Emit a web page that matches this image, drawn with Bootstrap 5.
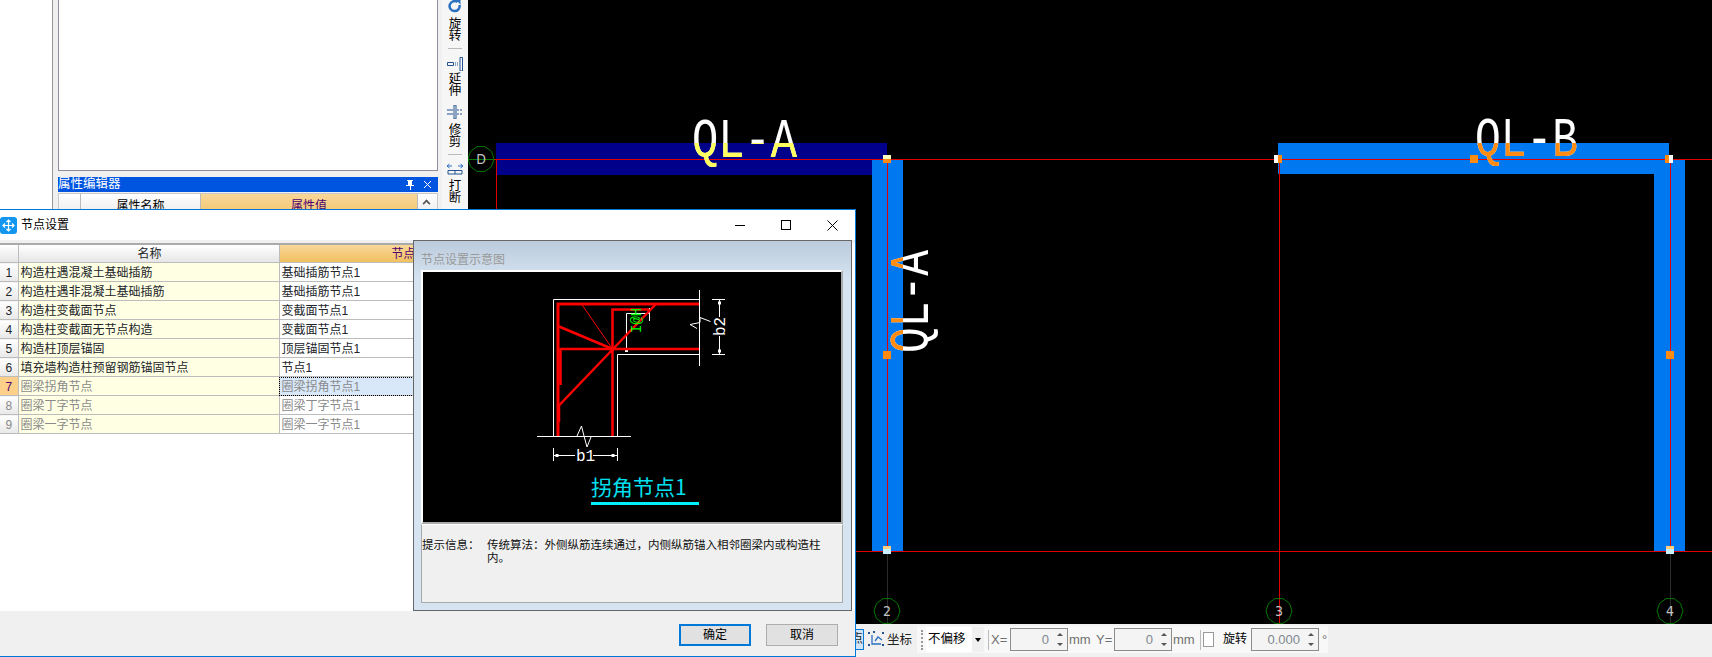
<!DOCTYPE html>
<html lang="zh-CN">
<head>
<meta charset="UTF-8">
<title>节点设置</title>
<link href="https://cdn.jsdelivr.net/npm/bootstrap@5.3.3/dist/css/bootstrap.min.css" rel="stylesheet">
<style>
body { margin: 0; width: 1712px; height: 657px; overflow: hidden; position: relative; background: #000; font: 12px/1.2 "Liberation Sans", "Noto Sans CJK SC", sans-serif; color: #000; }
.app-main { height: 624px; }
.side-blank { width: 53px; flex: none; background: #fff; border-right: 1px solid #999; }
.side-panel { width: 389px; flex: none; background: #f0f0f0; padding: 0 4px 0 5px; }
.list-box { height: 171px; background: #fff; border: 1px solid #8c8c9c; border-top: 0; }
.prop-title { height: 15px; margin-top: 6px; background: #0055e0; color: #fff; font-size: 12.5px; line-height: 15px; }
.prop-head { height: 30px; margin-top: 1px; border: 1px solid #c8c8c8; }
.prop-head > div { background: linear-gradient(#fff, #e4e4e4); border-right: 1px solid #bbb; text-align: center; line-height: 24px; }
.prop-head .ph-blank { width: 22px; }
.prop-head .ph-name { width: 120px; }
.prop-head .ph-val { width: 217px; background: linear-gradient(#f8d798, #f0c060); color: #500070; }
.prop-head .ph-scroll { flex-grow: 1; border-right: 0; position: relative; }
.prop-head .ph-scroll::after { content: ""; position: absolute; left: 5px; top: 6px; width: 7px; height: 7px; border: solid #555; border-width: 2px 0 0 2px; transform: rotate(45deg) scale(.8); }
.tool-strip { width: 26px; flex: none; background: #f6f6f6; }
.tool-strip svg { flex: none; }
.tool-item { width: 13px; line-height: 12px; text-align: center; font-size: 12.5px; flex: none; }
.tool-sep { width: 14px; height: 1px; background: #bbb; flex: none; }
.mt-tool-2 { margin-top: 2px; }
.mt-tool-5 { margin-top: 5px; }
.mt-tool-6 { margin-top: 6px; }
.mt-tool-8 { margin-top: 8px; }
.cad-view { width: 1244px; height: 624px; display: block; background: #000; flex: none; }
.cad-text { font-family: "Liberation Mono", monospace; }
.grid-no { font: 14px "DejaVu Sans Condensed", "DejaVu Sans", sans-serif; fill: #c4c4c4; text-anchor: middle; }
.status-bar { height: 33px; background: #f0f0f0; padding-left: 855px; color: #222; }
.status-bar > * { flex: none; }
.snap-btn { width: 9px; height: 21px; margin-top: 5px; border: 1px solid #0078d7; background: #cfe5f7; overflow: hidden; line-height: 19px; direction: rtl; }
.snap-icon { margin: 5px 2px 0 3px; }
.coord-label { width: 25px; font-size: 12.5px; white-space: nowrap; line-height: 33px; }
.tool-group { height: 27px; margin: 2px 0 0 5px; width: 411px; background: #f8f8f8; padding-left: 4px; color: #707070; font-size: 13px; white-space: nowrap; }
.tool-group > * { flex: none; }
.grip-dots { width: 2px; height: 20px; border-left: 2px dotted #999; }
.combo-box { width: 46px; height: 25px; background: #fff; margin-left: 3px; color: #000; line-height: 25px; padding-left: 2px; font-size: 12.500px; }
.combo-arrow { width: 12px; height: 25px; background: #f0f0f0; position: relative; }
.combo-arrow::after { content: ""; position: absolute; left: 3px; top: 11px; border: 3px solid transparent; border-top: 4px solid #000; }
.bar-sep { width: 1px; height: 20px; background: #bbb; }
.sep-a { margin-left: 4px; }
.x-label { width: 19px; margin-left: 2px; }
.y-label { width: 18px; }
.mm-label { width: 27px; margin-left: 1px; }
.spin-box { width: 58px; height: 23px; border: 1px solid #8c8c8c; background: #f4f4f4; color: #808890; text-align: right; line-height: 21px; padding-right: 18px; position: relative; }
.spin-box::before, .spin-box::after { content: ""; position: absolute; right: 4px; border: 3px solid transparent; }
.spin-box::before { top: 1px; border-bottom: 3px solid #555; }
.spin-box::after { bottom: 1px; border-top: 3px solid #555; }
.spin-wide { width: 68px; margin-left: 4px; }
.check-box { width: 11px; height: 15px; margin-left: 2px; border: 1px solid #999; background: #fff; }
.rot-label { width: 24px; margin-left: 9px; color: #000; font-size: 12px; }
.deg-label { margin-left: 3px; }
.node-dialog { position: absolute; left: 0; top: 209px; width: 856px; height: 448px; background: #fff; border: 1px solid #0078d7; border-left: 0; }
.dialog-title { height: 30px; }
.dialog-title .title-text { margin-left: 4px; font-size: 12px; }
.win-btn { width: 46px; height: 30px; }
.dialog-body { height: 371px; position: relative; overflow: hidden; background: #fff; }
.dialog-gap { height: 3px; background: #f0f0f0; }
.node-table { table-layout: fixed; width: 550px; margin: 0; border-collapse: collapse; border-top: 2px solid #aaa; }
.node-table th, .node-table td { height: 19px; padding: 2px 0 0 2px; font-size: 12px; line-height: 15px; vertical-align: middle; border: 1px solid #bcbcbc; border-left: 0; border-top: 0; font-weight: 400; white-space: nowrap; overflow: hidden; box-shadow: none; }
.node-table th { height: 18px; background: linear-gradient(#fff, #e6e6e6); text-align: center; }
.node-table th.val-head { background: linear-gradient(#f8d798, #f0c060); color: #500070; }
.node-table td.row-no { background: linear-gradient(#fff, #e8e8e8); text-align: center; padding-left: 0; }
.node-table td.row-name { background: #ffffe4; }
.node-table td.row-val { background: #fff; }
.node-table tr.row-off td { color: #8a8a8a; }
.node-table tr.row-sel td.row-no { background: #fdd08a; color: #500070; }
.node-table td.cell-sel { background: #d8e8f8; outline: 1px dotted #000; outline-offset: -1px; }
.preview-panel { position: absolute; left: 413px; top: 0; width: 439px; height: 371px; border: 1px solid #666; background: linear-gradient(#bccbdc, #d6e4f2 40px); }
.preview-title { height: 29px; padding: 12px 0 0 7px; color: #999; font-size: 12px; }
.preview-pic { display: block; width: 422px; height: 254px; margin-left: 7px; border: solid; border-width: 2px; border-color: #fff #aaa #aaa #fff; background: #000; }
.hint-box { width: 422px; height: 79px; margin-left: 7px; background: #f0f0f0; border: 1px solid #aaa; border-top-color: #fff; padding: 14px 0 0 0; font-size: 11.5px; line-height: 13px; color: #111; }
.hint-label { width: 65px; flex: none; }
.dialog-foot { height: 45px; background: #f0f0f0; padding: 13px 17px 0 0; column-gap: 15px; }
.dlg-btn { width: 72px; height: 22px; padding: 0; line-height: 18px; font-size: 12px; border-radius: 0; background: #e1e1e1; border: 1px solid #adadad; color: #000; }
.dlg-btn-main { border: 2px solid #0078d7; }
</style>
</head>
<body>

<div class="app-main d-flex">
  <div class="side-blank"></div>
  <div class="side-panel">
    <div class="list-box"></div>
    <div class="prop-title d-flex justify-content-between">
      <span>属性编辑器</span>
      <svg width="34" height="15" viewBox="0 0 34 15"><path d="M3 3h6v1h-1v4h2v1H7v4H6V9H2V8h2V4H3z" fill="#fff"/><path d="M20 4l7 7M27 4l-7 7" stroke="#fff" fill="none"/></svg>
    </div>
    <div class="prop-head d-flex">
      <div class="ph-blank"></div>
      <div class="ph-name">属性名称</div>
      <div class="ph-val">属性值</div>
      <div class="ph-scroll"></div>
    </div>
  </div>
  <div class="tool-strip d-flex flex-column align-items-center">
    <svg width="14" height="13" viewBox="0 0 14 13"><path d="M11.500 5a5 5 0 1 1-2-3" fill="none" stroke="#2a6fc0" stroke-width="2.500"/><path d="M8 0h4.500v4.500z" fill="#2a6fc0"/></svg>
    <div class="tool-item mt-tool-5">旋<br>转</div>
    <div class="tool-sep mt-tool-6"></div>
    <svg class="mt-tool-8" width="16" height="14" viewBox="0 0 16 14"><path d="M.5 5.500h6v3h-6z" fill="none" stroke="#25518f"/><path d="M8 6h3M8 8h3" stroke="#25518f" stroke-dasharray="1 1"/><path d="M13 .5h2.500v13.500H13z" fill="none" stroke="#25518f"/></svg>
    <div class="tool-item mt-tool-2">延<br>伸</div>
    <svg class="mt-tool-8" width="16" height="14" viewBox="0 0 16 14"><path d="M0 5h6M0 9h6" stroke="#25518f"/><path d="M10 5h5M10 9h5" stroke="#25518f" stroke-dasharray="2 1"/><path d="M7 0h2v14H7z" fill="none" stroke="#25518f"/></svg>
    <div class="tool-item mt-tool-5">修<br>剪</div>
    <div class="tool-sep mt-tool-6"></div>
    <svg class="mt-tool-8" width="16" height="12" viewBox="0 0 16 12"><path d="M0 3h5M11 3h5M2.500 1L0 3l2.500 2M13.500 1L16 3l-2.500 2" fill="none" stroke="#2a6fc0"/><path d="M1 7.500h14v3.500H1zM8 7.500V11" fill="none" stroke="#25518f"/></svg>
    <div class="tool-item mt-tool-5">打<br>断</div>
  </div>

  <svg class="cad-view" viewBox="468 0 1244 624" xmlns="http://www.w3.org/2000/svg">
    <defs>
      <polygon id="grid-ring" points="13,0 10.500,7.600 4,12.400 -4,12.400 -10.500,7.600 -13,0 -10.500,-7.600 -4,-12.400 4,-12.400 10.500,-7.600" fill="none" stroke="#007800"/>
      <clipPath id="clip-a"><rect x="496" y="143" width="391" height="32"/></clipPath>
      <clipPath id="clip-b"><rect x="1278" y="143" width="391" height="31"/></clipPath>
      <clipPath id="clip-v"><rect x="872" y="159" width="31" height="392"/></clipPath>
      <g id="handle"><rect x="-4" y="-4" width="8" height="8" fill="#ff8c10"/></g>
      <g id="handle-top"><rect x="-4" y="-4" width="8" height="8" fill="#ff8c10"/><rect x="-4" y="-4" width="8" height="4" fill="#ffffc0"/></g>
      <g id="handle-left"><rect x="-4" y="-4" width="8" height="8" fill="#ff8c10"/><rect x="-4" y="-4" width="4" height="8" fill="#fff"/></g>
      <g id="handle-right"><rect x="-4" y="-4" width="8" height="8" fill="#ff8c10"/><rect x="0" y="-4" width="4" height="8" fill="#fff"/></g>
      <g id="handle-low"><rect x="-4" y="-4" width="8" height="8" fill="#c8f0ff"/><rect x="-4" y="-4" width="8" height="3" fill="#ffd080"/></g>
    </defs>

    <rect x="496" y="143" width="391" height="32" fill="#00008b"/>
    <rect x="872" y="159" width="31" height="392" fill="#0078f0"/>
    <rect x="1278" y="143" width="391" height="31" fill="#0078f0"/>
    <rect x="1654" y="159" width="31" height="392" fill="#0078f0"/>

    <path d="M494 159.500H1712M496 551.500H1712M496.500 159V220M887.500 159V551M1279.500 159V624M1670.500 159V551" stroke="#e00000" fill="none"/>
    <path d="M887.500 551V624M1670.500 551V624" stroke="#2c2c2c" fill="none"/>
    <path d="M468 159.500H494" stroke="#007800"/>

    <use href="#grid-ring" x="481" y="159"/><text class="grid-no" x="481" y="164">D</text>
    <use href="#grid-ring" x="887" y="611"/><text class="grid-no" x="887" y="616">2</text>
    <use href="#grid-ring" x="1279" y="611"/><text class="grid-no" x="1279" y="616">3</text>
    <use href="#grid-ring" x="1670" y="611"/><text class="grid-no" x="1670" y="616">4</text>

    <text class="cad-text" x="692" y="157" font-size="56" fill="#fff" textLength="105" lengthAdjust="spacingAndGlyphs">QL-A</text>
    <text class="cad-text" x="692" y="157" font-size="56" fill="#ffff60" textLength="105" lengthAdjust="spacingAndGlyphs" clip-path="url(#clip-a)">QL-A</text>
    <text class="cad-text" x="1475" y="156" font-size="56" fill="#fff" textLength="103" lengthAdjust="spacingAndGlyphs">QL-B</text>
    <text class="cad-text" x="1475" y="156" font-size="56" fill="#ff8c10" textLength="103" lengthAdjust="spacingAndGlyphs" clip-path="url(#clip-b)">QL-B</text>
    <text class="cad-text" transform="translate(928 353) rotate(-90)" font-size="56" fill="#fff" textLength="103" lengthAdjust="spacingAndGlyphs">QL-A</text>
    <g clip-path="url(#clip-v)"><text class="cad-text" transform="translate(928 353) rotate(-90)" font-size="56" fill="#ff8c10" textLength="103" lengthAdjust="spacingAndGlyphs">QL-A</text></g>

    <use href="#handle-top" x="887" y="159"/>
    <use href="#handle-left" x="1278" y="159"/>
    <use href="#handle" x="1474" y="159"/>
    <use href="#handle-right" x="1669" y="159"/>
    <use href="#handle" x="887" y="355"/>
    <use href="#handle" x="1670" y="355"/>
    <use href="#handle-low" x="887" y="550"/>
    <use href="#handle-low" x="1670" y="550"/>
  </svg>
</div>

<div class="status-bar d-flex">
  <div class="snap-btn">点</div>
  <svg class="snap-icon" width="18" height="20" viewBox="0 0 18 20"><path d="M1 3h2v2H1zM15 3h2v2h-2zM1 15h2v2H1zM15 15h2v2h-2zM6 2h2v2H6z" fill="#25518f"/><path d="M5 6v9h9M8 12l3-4 4 3" fill="none" stroke="#2a6fc0" stroke-width="1.300"/></svg>
  <div class="coord-label">坐标</div>
  <div class="tool-group d-flex align-items-center">
    <div class="grip-dots"></div>
    <div class="combo-box">不偏移</div>
    <div class="combo-arrow"></div>
    <div class="bar-sep sep-a"></div>
    <div class="x-label">X=</div>
    <div class="spin-box">0</div>
    <div class="mm-label">mm</div>
    <div class="y-label">Y=</div>
    <div class="spin-box">0</div>
    <div class="mm-label">mm</div>
    <div class="bar-sep"></div>
    <div class="check-box"></div>
    <div class="rot-label">旋转</div>
    <div class="spin-box spin-wide">0.000</div>
    <div class="deg-label">°</div>
  </div>
</div>

<div class="node-dialog">
  <div class="dialog-title d-flex align-items-center">
    <svg width="17" height="17" viewBox="0 0 17 17"><rect width="17" height="17" rx="3" fill="#1296f0"/><path d="M8.500 3v11M3 8.500h11M6.500 5l2-2 2 2M6.500 12l2 2 2-2M5 6.500l-2 2 2 2M12 6.500l2 2-2 2" fill="none" stroke="#fff" stroke-width="1.200"/></svg>
    <span class="title-text">节点设置</span>
    <div class="ms-auto d-flex">
      <div class="win-btn d-flex align-items-center justify-content-center"><svg width="11" height="11"><path d="M0 5.500h10" stroke="#000"/></svg></div>
      <div class="win-btn d-flex align-items-center justify-content-center"><svg width="11" height="11"><rect x=".5" y=".5" width="9" height="9" fill="none" stroke="#000"/></svg></div>
      <div class="win-btn d-flex align-items-center justify-content-center"><svg width="11" height="11"><path d="M.5.500l10 10M10.500.500l-10 10" stroke="#000"/></svg></div>
    </div>
  </div>
  <div class="dialog-body">
    <div class="dialog-gap"></div>
    <table class="table node-table">
      <colgroup><col style="width:18px"><col style="width:261px"><col style="width:271px"></colgroup>
      <thead>
        <tr><th></th><th>名称</th><th class="val-head">节点设置</th></tr>
      </thead>
      <tbody>
        <tr><td class="row-no">1</td><td class="row-name">构造柱遇混凝土基础插筋</td><td class="row-val">基础插筋节点1</td></tr>
        <tr><td class="row-no">2</td><td class="row-name">构造柱遇非混凝土基础插筋</td><td class="row-val">基础插筋节点1</td></tr>
        <tr><td class="row-no">3</td><td class="row-name">构造柱变截面节点</td><td class="row-val">变截面节点1</td></tr>
        <tr><td class="row-no">4</td><td class="row-name">构造柱变截面无节点构造</td><td class="row-val">变截面节点1</td></tr>
        <tr><td class="row-no">5</td><td class="row-name">构造柱顶层锚固</td><td class="row-val">顶层锚固节点1</td></tr>
        <tr><td class="row-no">6</td><td class="row-name">填充墙构造柱预留钢筋锚固节点</td><td class="row-val">节点1</td></tr>
        <tr class="row-off row-sel"><td class="row-no">7</td><td class="row-name">圈梁拐角节点</td><td class="row-val cell-sel">圈梁拐角节点1</td></tr>
        <tr class="row-off"><td class="row-no">8</td><td class="row-name">圈梁丁字节点</td><td class="row-val">圈梁丁字节点1</td></tr>
        <tr class="row-off"><td class="row-no">9</td><td class="row-name">圈梁一字节点</td><td class="row-val">圈梁一字节点1</td></tr>
      </tbody>
    </table>

    <div class="preview-panel">
      <div class="preview-title">节点设置示意图</div>
      <svg class="preview-pic" viewBox="423 272 418 250" xmlns="http://www.w3.org/2000/svg">
        <g fill="none" stroke="#fff">
          <path d="M553.500 436V299.500H699.500M699.500 290V366M617.500 436V354.500H699.500"/>
          <path d="M537 436.500H631M577 436l4.500-10 2.500 10 3 11 4-10"/>
          <path d="M710.500 321.500L700 317.500V322.500L690 324.500l7 4"/>
          <path d="M553.500 448V461M617.500 448V461M553.500 455.500H575M593 455.500H617.500"/>
          <path d="M712 299.500H725M712 354.500H725M719.500 299.500V317M719.500 336V354.500"/>
          <path d="M626.500 352V313.500H649.500M649.500 308V321"/>
        </g>
        <g fill="#fff">
          <rect x="555.500" y="454" width="3" height="3"/>
          <rect x="611.500" y="454" width="3" height="3"/>
          <rect x="718" y="301.500" width="3" height="3"/>
          <rect x="718" y="349.500" width="3" height="3"/>
          <rect x="625" y="349" width="3" height="3"/>
        </g>
        <g fill="none" stroke="#f00">
          <path d="M558 436V304H699" stroke-width="3"/>
          <path d="M612.500 436V309.500H649" stroke-width="2.500"/>
          <path d="M560.500 385V349H699" stroke-width="2.500"/>
          <path d="M558.500 406L656 304" stroke-width="2.500"/>
          <path d="M559 326.500L612.500 349" stroke-width="2.500"/>
          <path d="M581.500 304L612.500 349"/>
          <path d="M559 406V422" stroke-width="2.500"/>
        </g>
        <text transform="translate(641 333) rotate(-90)" font-family="Liberation Mono, monospace" font-size="14" fill="#0f0">I@H</text>
        <text x="576" y="461" font-family="Liberation Mono, monospace" font-size="16" fill="#fff">b1</text>
        <text transform="translate(725 336) rotate(-90)" font-family="Liberation Mono, monospace" font-size="16" fill="#fff">b2</text>
        <text x="591" y="495" font-size="21" fill="#00e0f0" font-family="Noto Sans CJK SC, sans-serif">拐角节点1</text>
        <rect x="591" y="502" width="108" height="3" fill="#00f0ff"/>
      </svg>
      <div class="hint-box d-flex">
        <div class="hint-label">提示信息：</div>
        <div>传统算法：外侧纵筋连续通过，内侧纵筋锚入相邻圈梁内或构造柱内。</div>
      </div>
    </div>
  </div>
  <div class="dialog-foot d-flex justify-content-end">
    <button type="button" class="btn dlg-btn dlg-btn-main">确定</button>
    <button type="button" class="btn dlg-btn">取消</button>
  </div>
</div>

<script src="https://cdn.jsdelivr.net/npm/bootstrap@5.3.3/dist/js/bootstrap.bundle.min.js"></script>
</body>
</html>
